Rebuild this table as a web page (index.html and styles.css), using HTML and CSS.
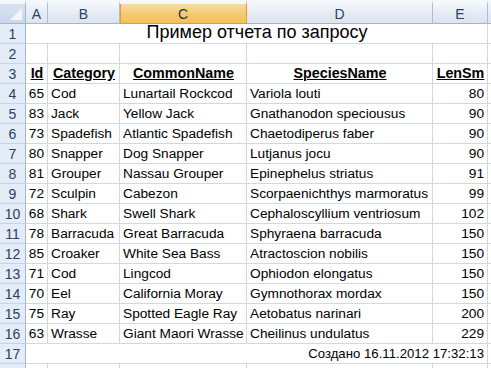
FILE: index.html
```html
<!DOCTYPE html>
<html lang="ru">
<head>
<meta charset="utf-8">
<title>Пример отчета по запросу</title>
<link rel="stylesheet" href="styles.css">
</head>
<body>
<div class="sheet">
  <div class="corner"><span class="tri"></span></div>
  <div class="ch">A</div>
  <div class="ch">B</div>
  <div class="ch sel">C</div>
  <div class="ch">D</div>
  <div class="ch">E</div>
  <div class="ch last"></div>

  <div class="rh">1</div>
  <div class="c merged title">Пример отчета по запросу</div>
  <div class="c last"></div>

  <div class="rh">2</div>
  <div class="c"></div><div class="c"></div><div class="c"></div><div class="c"></div><div class="c"></div><div class="c last"></div>

  <div class="rh">3</div>
  <div class="c hd">Id</div>
  <div class="c hd">Category</div>
  <div class="c hd">CommonName</div>
  <div class="c hd">SpeciesName</div>
  <div class="c hd">LenSm</div>
  <div class="c last"></div>

  <div class="rh">4</div><div class="c n">65</div><div class="c">Cod</div><div class="c">Lunartail Rockcod</div><div class="c">Variola louti</div><div class="c n">80</div><div class="c last"></div>
  <div class="rh">5</div><div class="c n">83</div><div class="c">Jack</div><div class="c">Yellow Jack</div><div class="c">Gnathanodon speciousus</div><div class="c n">90</div><div class="c last"></div>
  <div class="rh">6</div><div class="c n">73</div><div class="c">Spadefish</div><div class="c">Atlantic Spadefish</div><div class="c">Chaetodiperus faber</div><div class="c n">90</div><div class="c last"></div>
  <div class="rh">7</div><div class="c n">80</div><div class="c">Snapper</div><div class="c">Dog Snapper</div><div class="c">Lutjanus jocu</div><div class="c n">90</div><div class="c last"></div>
  <div class="rh">8</div><div class="c n">81</div><div class="c">Grouper</div><div class="c">Nassau Grouper</div><div class="c">Epinephelus striatus</div><div class="c n">91</div><div class="c last"></div>
  <div class="rh">9</div><div class="c n">72</div><div class="c">Sculpin</div><div class="c">Cabezon</div><div class="c">Scorpaenichthys marmoratus</div><div class="c n">99</div><div class="c last"></div>
  <div class="rh">10</div><div class="c n">68</div><div class="c">Shark</div><div class="c">Swell Shark</div><div class="c">Cephaloscyllium ventriosum</div><div class="c n">102</div><div class="c last"></div>
  <div class="rh">11</div><div class="c n">78</div><div class="c">Barracuda</div><div class="c">Great Barracuda</div><div class="c">Sphyraena barracuda</div><div class="c n">150</div><div class="c last"></div>
  <div class="rh">12</div><div class="c n">85</div><div class="c">Croaker</div><div class="c">White Sea Bass</div><div class="c">Atractoscion nobilis</div><div class="c n">150</div><div class="c last"></div>
  <div class="rh">13</div><div class="c n">71</div><div class="c">Cod</div><div class="c">Lingcod</div><div class="c">Ophiodon elongatus</div><div class="c n">150</div><div class="c last"></div>
  <div class="rh">14</div><div class="c n">70</div><div class="c">Eel</div><div class="c">California Moray</div><div class="c">Gymnothorax mordax</div><div class="c n">150</div><div class="c last"></div>
  <div class="rh">15</div><div class="c n">75</div><div class="c">Ray</div><div class="c">Spotted Eagle Ray</div><div class="c">Aetobatus narinari</div><div class="c n">200</div><div class="c last"></div>
  <div class="rh">16</div><div class="c n">63</div><div class="c">Wrasse</div><div class="c">Giant Maori Wrasse</div><div class="c">Cheilinus undulatus</div><div class="c n">229</div><div class="c last"></div>

  <div class="rh">17</div>
  <div class="c merged stamp">Создано 16.11.2012 17:32:13</div>
  <div class="c last"></div>

  <div class="rh"></div>
  <div class="c"></div><div class="c"></div><div class="c"></div><div class="c"></div><div class="c"></div><div class="c last"></div>
</div>
</body>
</html>
```

FILE: styles.css
```css
html, body {
  margin: 0;
  padding: 0;
  background: #ffffff;
  overflow: hidden;
}

.sheet {
  display: grid;
  grid-template-columns: 26px 22px 72px 127px 186px 55px 1fr;
  grid-template-rows: 24px repeat(18, 20px);
  width: 491px;
  height: 368px;
  overflow: hidden;
  font-family: "Liberation Sans", Arial, sans-serif;
  font-size: 13.7px;
  color: #000;
}

.corner {
  position: relative;
  box-sizing: border-box;
  border-top: 4px solid #f4f7fb;
  border-right: 1px solid #9eb6ce;
  border-bottom: 1px solid #9eb6ce;
  background: linear-gradient(#d9e3f0, #c9d7ea);
}

.tri {
  position: absolute;
  right: 3px;
  bottom: 3px;
  width: 0;
  height: 0;
  border-left: 12px solid transparent;
  border-bottom: 12px solid #f2f5fa;
}

.ch {
  box-sizing: border-box;
  border-top: 4px solid #f4f7fb;
  border-right: 1px solid #a9bfd6;
  border-bottom: 1px solid #9eb6ce;
  background: linear-gradient(#f3f6fb, #e4eaf3 55%, #dce4ef);
  display: flex;
  align-items: center;
  justify-content: center;
  font-size: 14px;
  color: #27415f;
  padding-top: 1px;
}

.ch.sel {
  background: linear-gradient(#f9dba3, #f4c970 55%, #f1c05c);
  border-right: 1px solid #f29536;
  border-bottom: 1px solid #f29536;
  box-shadow: inset 1px 0 0 #f29536;
  color: #1f2f44;
}

.ch.last {
  border-right: none;
}

.rh {
  box-sizing: border-box;
  border-right: 1px solid #9eb6ce;
  border-bottom: 1px solid #c5d5e8;
  background: #e4ecf7;
  display: flex;
  align-items: center;
  justify-content: center;
  font-size: 14px;
  color: #27415f;
  padding-top: 1px;
}

.c {
  box-sizing: border-box;
  border-right: 1px solid #d0d7e5;
  border-bottom: 1px solid #d0d7e5;
  display: flex;
  align-items: flex-end;
  padding: 0 2px 2px 3px;
  line-height: 15px;
  white-space: nowrap;
  overflow: visible;
}

.c.last {
  border-right: none;
}

.c.n {
  justify-content: flex-end;
  padding-right: 3px;
}

.c.hd {
  justify-content: center;
  font-weight: bold;
  text-decoration: underline;
  font-size: 14.3px;
}

.merged {
  grid-column: 2 / 7;
}

.title {
  justify-content: center;
  font-size: 18px;
  line-height: 19px;
  padding-bottom: 1px;
}

.stamp {
  justify-content: flex-end;
  padding-right: 3px;
  font-size: 13.2px;
}
```
